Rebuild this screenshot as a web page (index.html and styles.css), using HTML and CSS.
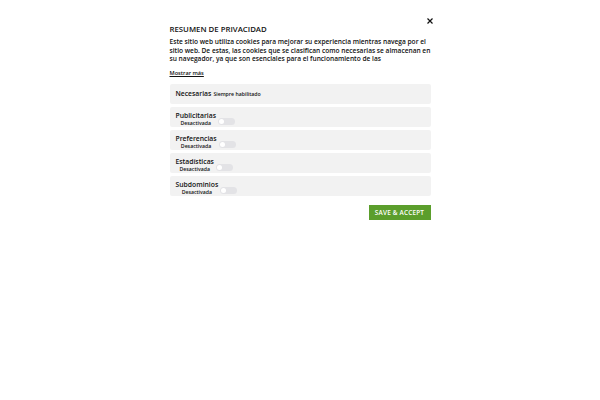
FILE: index.html
```html
<!DOCTYPE html>
<html lang="es">
<head>
    <meta charset="UTF-8">
    <meta name="viewport" content="width=device-width, initial-scale=1.0">
    <title>Privacidad</title>
    <link rel="stylesheet" href="styles.css">
</head>
<body>
    <div class="modal">
        <div class="modal-head">
            <button class="close-button" aria-label="Cerrar">
                <svg width="6" height="6" viewBox="0 0 6 6"><path d="M0.5 0.5L5.5 5.5M5.5 0.5L0.5 5.5" stroke="#111" stroke-width="1.2"/></svg>
            </button>
        </div>
        <h2 class="title">RESUMEN DE PRIVACIDAD</h2>
        <p class="summary">Este sitio web utiliza cookies para mejorar su experiencia mientras navega por el sitio web. De estas, las cookies que se clasifican como necesarias se almacenan en su navegador, ya que son esenciales para el funcionamiento de las</p>
        <a class="more" href="#">Mostrar más</a>

        <div class="categories">
            <div class="category category-fixed">
                <span class="name">Necesarias</span>
                <span class="always">Siempre habilitado</span>
            </div>
            <div class="category">
                <div class="label">
                    <span class="name">Publicitarias</span>
                    <span class="state">Desactivada</span>
                </div>
                <span class="switch"></span>
            </div>
            <div class="category">
                <div class="label">
                    <span class="name">Preferencias</span>
                    <span class="state">Desactivada</span>
                </div>
                <span class="switch"></span>
            </div>
            <div class="category">
                <div class="label">
                    <span class="name">Estadísticas</span>
                    <span class="state">Desactivada</span>
                </div>
                <span class="switch"></span>
            </div>
            <div class="category">
                <div class="label">
                    <span class="name">Subdominios</span>
                    <span class="state">Desactivada</span>
                </div>
                <span class="switch"></span>
            </div>
        </div>

        <div class="actions">
            <button class="save-button">SAVE &amp; ACCEPT</button>
        </div>
    </div>
</body>
</html>
```

FILE: styles.css
```css
body {
    margin: 0;
    background: #fff;
    font-family: 'Open Sans', sans-serif;
    color: #111;
}

.modal {
    width: 261px;
    margin: 0 auto;
    padding: 18px 0 0 0;
}

.modal-head {
    display: flex;
    justify-content: flex-end;
    height: 6px;
}

.close-button {
    background: none;
    border: none;
    padding: 0;
    width: 6px;
    height: 6px;
    margin-right: -2px;
    display: flex;
    cursor: pointer;
}

.title {
    font-size: 7.8px;
    font-weight: 600;
    margin: 0;
    line-height: 10px;
}

.summary {
    font-size: 6.6px;
    font-weight: 600;
    line-height: 8.6px;
    margin: 4px 0 0 0;
}

.more {
    display: block;
    width: fit-content;
    font-size: 5.6px;
    font-weight: 600;
    line-height: 7px;
    color: #111;
    margin-top: 6px;
    text-decoration: underline;
}

.categories {
    display: flex;
    flex-direction: column;
    gap: 3px;
    margin-top: 7px;
}

.category {
    background: #f2f2f2;
    height: 20px;
    box-sizing: border-box;
    border-radius: 2px;
    padding: 0 6px 1px 6px;
    display: flex;
    align-items: flex-end;
    gap: 2px;
}

.category-fixed {
    align-items: center;
    padding-bottom: 0;
}

.name {
    font-size: 6.8px;
    font-weight: 600;
    line-height: 8px;
}

.always {
    font-size: 5.2px;
    font-weight: 600;
    padding-top: 1px;
}

.label {
    display: flex;
    flex-direction: column;
    align-items: center;
}

.state {
    font-size: 5.2px;
    font-weight: 600;
    line-height: 6px;
}

.switch {
    width: 17px;
    height: 7px;
    margin-bottom: 0.5px;
    border-radius: 4px;
    background: #e3e3e6;
    position: relative;
}

.switch::after {
    content: "";
    position: absolute;
    left: 1px;
    top: 1px;
    width: 5px;
    height: 5px;
    border-radius: 50%;
    background: #fff;
}

.actions {
    display: flex;
    justify-content: flex-end;
    margin-top: 9px;
}

.save-button {
    background: #5b9e2c;
    color: #fff;
    border: none;
    font-family: 'Open Sans', sans-serif;
    font-size: 6.4px;
    font-weight: 600;
    letter-spacing: 0.2px;
    width: 62px;
    height: 15px;
    padding: 0;
    cursor: pointer;
}
```
